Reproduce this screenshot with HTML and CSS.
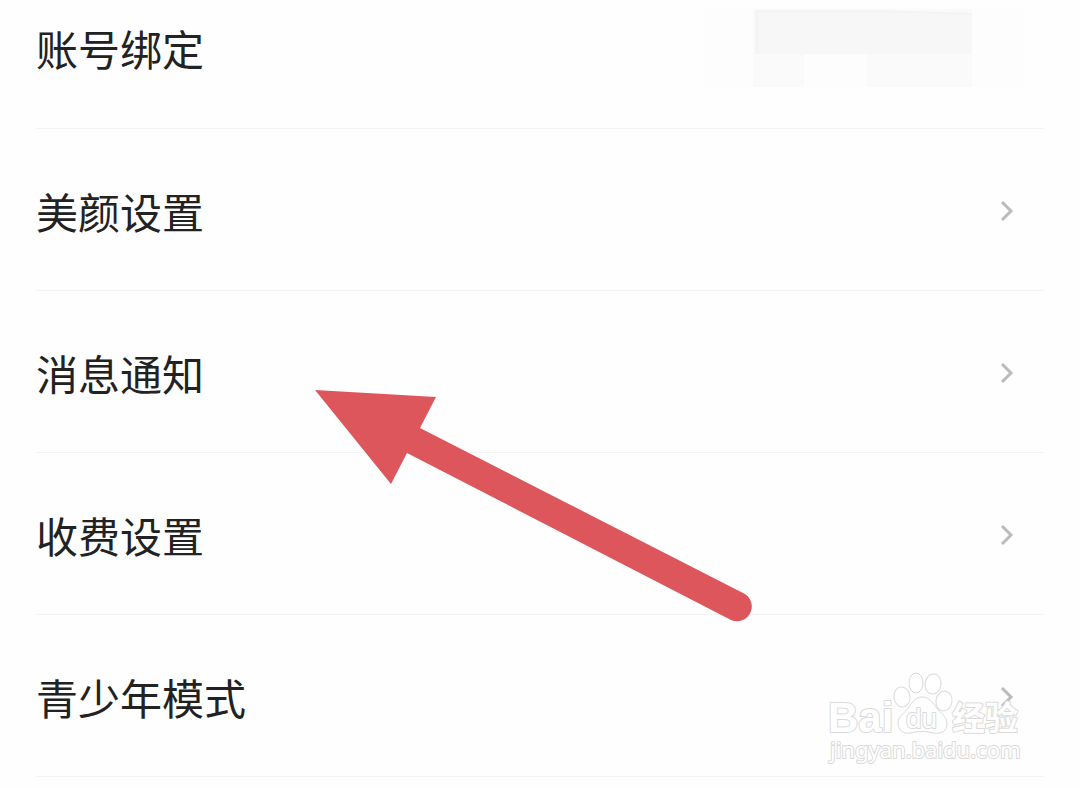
FILE: index.html
```html
<!DOCTYPE html>
<html lang="zh-CN">
<head>
<meta charset="utf-8">
<meta name="viewport" content="width=device-width, initial-scale=1">
<title>设置</title>
<link rel="stylesheet" href="styles.css">
</head>
<body>
<main class="page">
  <nav class="settings">
    <a class="row row--account" href="#account">
      <span class="row__label">账号绑定</span>
      <svg class="masked" viewBox="0 0 320 80" aria-hidden="true">
        <rect class="mask-1" width="320" height="79"/>
        <rect class="mask-2" x="49" y="1" width="219" height="78"/>
        <rect class="mask-1" x="100" y="46" width="62" height="34"/>
        <path class="mask-3" d="M51 2h118l99 3v41H51z"/>
        <path class="mask-4" d="M51 2h4v44h-4zM55 2h114l99 3v2l-99-3H55z"/>
      </svg>
    </a>
    <a class="row" href="#beauty">
      <span class="row__label">美颜设置</span>
      <svg class="chevron" viewBox="0 0 14 24" aria-hidden="true"><path d="M2 3l9 9-9 9"/></svg>
    </a>
    <a class="row" href="#notice">
      <span class="row__label">消息通知</span>
      <svg class="chevron" viewBox="0 0 14 24" aria-hidden="true"><path d="M2 3l9 9-9 9"/></svg>
    </a>
    <a class="row" href="#fees">
      <span class="row__label">收费设置</span>
      <svg class="chevron" viewBox="0 0 14 24" aria-hidden="true"><path d="M2 3l9 9-9 9"/></svg>
    </a>
    <a class="row" href="#teen">
      <span class="row__label">青少年模式</span>
      <svg class="chevron" viewBox="0 0 14 24" aria-hidden="true"><path d="M2 3l9 9-9 9"/></svg>
    </a>
  </nav>

  <svg class="pointer" viewBox="0 0 438 233" aria-hidden="true">
    <path d="M1 1L122 8 106 39 429 204A14 14 0 0 1 417 231L93 64 77 95z"/>
  </svg>

  <svg class="watermark" viewBox="0 0 204 100" role="img" aria-label="Baidu 经验 jingyan.baidu.com">
    <text class="wm-bai" x="4" y="62">Bai</text>
    <g class="wm-paw">
      <ellipse cx="78" cy="27" rx="8" ry="10" transform="rotate(-8 78 27)"/>
      <ellipse cx="92" cy="13" rx="7" ry="10"/>
      <ellipse cx="109" cy="14" rx="8" ry="10" transform="rotate(8 109 14)"/>
      <ellipse cx="120" cy="31" rx="8" ry="10" transform="rotate(10 120 31)"/>
      <path d="M98 27C104 27 108 31 112 37 116 43 123 46 123 54 123 61 117 64 110 63 102 61 94 61 86 63 79 64 74 60 74 53 74 46 81 43 85 37 89 31 92 27 98 27z"/>
    </g>
    <text class="wm-du" x="82" y="58">du</text>
    <text class="wm-cn" x="128" y="60">经验</text>
    <text class="wm-url" x="6" y="88">jingyan.baidu.com</text>
  </svg>
</main>
</body>
</html>
```
FILE: styles.css
```css
* {
  box-sizing: border-box;
}

body {
  margin: 0;
  background: #fefefe;
  color: #222;
  font-family: "Noto Sans CJK SC", sans-serif;
}

.page {
  position: relative;
  overflow: hidden;
  min-height: 100vh;
}

.settings {
  padding: 0 36px;
}

.row {
  display: flex;
  align-items: center;
  justify-content: space-between;
  padding: 54px 30px 51px 0;
  border-bottom: 1px solid #f3f3f3;
  color: inherit;
  text-decoration: none;
}

.row--account {
  padding: 8px 20px 40px 0;
}

.row__label {
  font-size: 42px;
  line-height: 56px;
}

.chevron {
  width: 14px;
  height: 24px;
  fill: none;
  stroke: #bbb;
  stroke-width: 3;
}

.masked {
  width: 320px;
  height: 80px;
}

.mask-1 { fill: #fdfdfd; }
.mask-2 { fill: #fafafa; }
.mask-3 { fill: #f7f7f7; }
.mask-4 { fill: #f4f4f4; }

.pointer {
  position: absolute;
  left: 314px;
  top: 389px;
  width: 438px;
  height: 233px;
  fill: #dc565b;
}

.watermark {
  position: absolute;
  right: 52px;
  top: 670px;
  width: 204px;
  height: 100px;
  fill: #fff;
  stroke: #dadada;
  stroke-width: 1;
}

.wm-bai,
.wm-du,
.wm-cn,
.wm-url {
  stroke-width: 2;
  stroke-linejoin: round;
  paint-order: stroke;
}

.wm-bai {
  font: bold 42px "Liberation Sans", sans-serif;
}

.wm-du {
  font: 28px "Liberation Sans", sans-serif;
}

.wm-cn {
  font: bold 33px "Noto Sans CJK SC", sans-serif;
}

.wm-url {
  font: 22px "Noto Sans", sans-serif;
}
```
